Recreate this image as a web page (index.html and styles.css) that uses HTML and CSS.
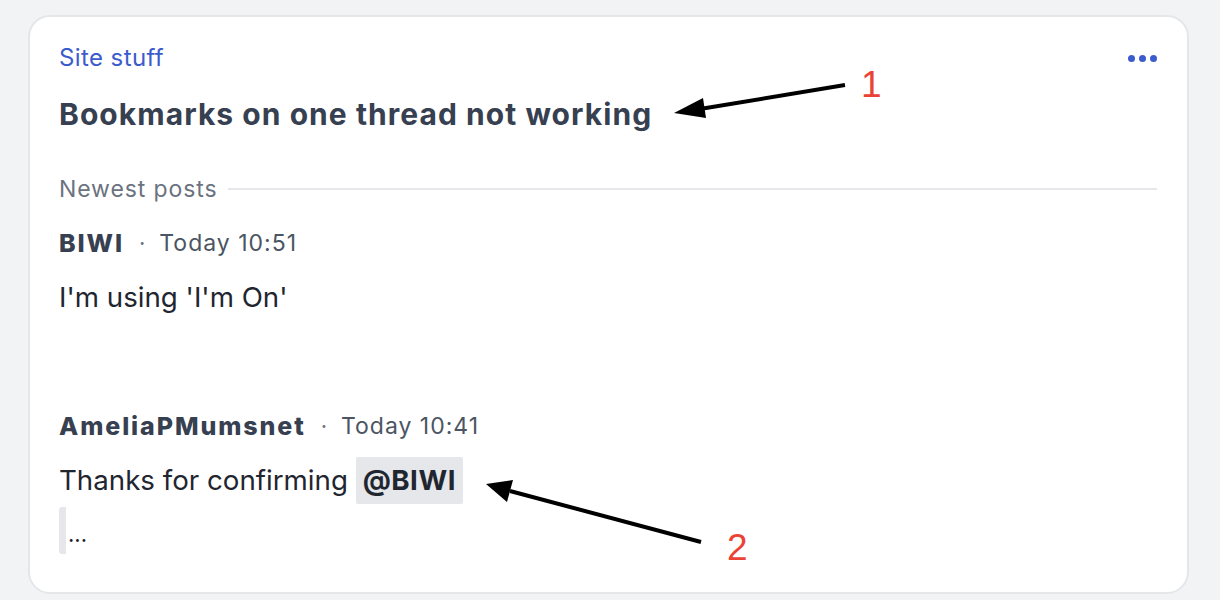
FILE: index.html
```html
<!DOCTYPE html>
<html>
<head>
<meta charset="utf-8">
<link rel="stylesheet" href="styles.css">
</head>
<body>
<div class="page">
  <div class="card">
    <div class="top">
      <a class="category">Site stuff</a>
      <div class="more"><span></span><span></span><span></span></div>
    </div>
    <h1 class="title">Bookmarks on one thread not working</h1>
    <div class="section"><span class="section-label">Newest posts</span><span class="rule"></span></div>
    <div class="post">
      <div class="meta"><span class="author">BIWI</span><span class="dot">·</span><span class="time">Today 10:51</span></div>
      <p class="body">I'm using 'I'm On'</p>
    </div>
    <div class="post second">
      <div class="meta"><span class="author">AmeliaPMumsnet</span><span class="dot">·</span><span class="time">Today 10:41</span></div>
      <p class="body">Thanks for confirming <span class="mention">@BIWI</span></p>
      <div class="quote">...</div>
    </div>
  </div>
  <svg class="annot" width="1220" height="600" viewBox="0 0 1220 600">
    <line x1="845" y1="85" x2="700" y2="109" stroke="#000" stroke-width="4"/>
    <polygon points="674,113 703,98 706,118" fill="#000"/>
    <line x1="701" y1="542" x2="510" y2="491" stroke="#000" stroke-width="4"/>
    <polygon points="486,484 513,480 507,502" fill="#000"/>
    <text x="861" y="97" class="num">1</text>
    <text x="727" y="560" class="num">2</text>
  </svg>
</div>
</body>
</html>
```
FILE: styles.css
```css
html, body {
  margin: 0;
  padding: 0;
  background: #f2f3f5;
  font-family: Inter, "Noto Sans", sans-serif;
}
.page {
  position: relative;
  width: 1220px;
  height: 600px;
  padding: 15px 31px 0 28px;
  box-sizing: border-box;
}
.card {
  background: #fff;
  border: 2px solid #e4e6ea;
  border-radius: 22px;
  height: 579px;
  box-sizing: border-box;
  padding: 26px 30px 0 29px;
}
.top {
  display: flex;
  justify-content: space-between;
  align-items: center;
  height: 30px;
}
.category {
  color: #3c5bcc;
  font-size: 24px;
  line-height: 30px;
  letter-spacing: 0.4px;
}
.more {
  display: flex;
  gap: 4px;
  margin-right: 0;
}
.more span {
  width: 7px;
  height: 7px;
  border-radius: 50%;
  background: #3c5bcc;
}
.title {
  margin: 23px 0 0;
  font-size: 30px;
  line-height: 36px;
  font-weight: 700;
  color: #374050;
  letter-spacing: 1.05px;
}
.section {
  display: flex;
  align-items: center;
  gap: 10px;
  margin-top: 43px;
}
.section-label {
  color: #6b7280;
  font-size: 23px;
  line-height: 28px;
  letter-spacing: 0.9px;
}
.rule {
  flex: 1;
  height: 2px;
  background: #e5e7eb;
}
.post {
  margin-top: 25px;
}
.post.second {
  margin-top: 90px;
}
.meta {
  display: flex;
  align-items: center;
  height: 30px;
}
.author {
  font-weight: 800;
  font-size: 25px;
  color: #374050;
  letter-spacing: 1.9px;
}
.dot {
  color: #6b7280;
  font-size: 22px;
  margin: 0 14px 0 15px;
}
.time {
  color: #4b5563;
  font-size: 23px;
  letter-spacing: 1px;
}
.body {
  margin: 15px 0 0;
  font-size: 27.7px;
  line-height: 48px;
  color: #1f2630;
}
.mention {
  display: inline-block;
  background: #e5e7eb;
  font-weight: 700;
  padding: 0 7px;
  border-radius: 2px;
  line-height: 47px;
  letter-spacing: 0.5px;
}
.quote {
  margin-top: 3px;
  height: 47px;
  border-left: 7px solid #e5e7eb;
  border-radius: 3px;
  padding-left: 2px;
  font-size: 22px;
  line-height: 54px;
  color: #1f2630;
}
.annot {
  position: absolute;
  left: 0;
  top: 0;
  pointer-events: none;
}
.num {
  fill: #ea4335;
  font-family: "Liberation Sans", Arial, sans-serif;
  font-size: 37px;
}
```
